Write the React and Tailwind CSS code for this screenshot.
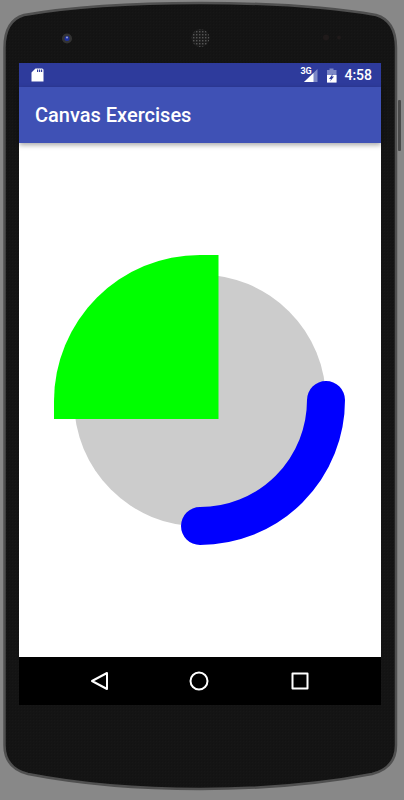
function PhoneBody() {
  return (
    <svg className="absolute inset-0" width="404" height="800" viewBox="0 0 404 800">
      <defs>
        <pattern id="grain" width="3" height="3" patternUnits="userSpaceOnUse">
          <rect width="3" height="3" fill="#141414" />
          <rect width="1" height="1" fill="#171717" />
          <rect x="2" y="2" width="1" height="1" fill="#121212" />
        </pattern>
        <pattern id="mesh" width="3" height="3" patternUnits="userSpaceOnUse">
          <rect width="3" height="3" fill="#1c1c1c" />
          <rect x="1" y="1" width="1.4" height="1.4" fill="#555" />
        </pattern>
      </defs>
      <rect x="398" y="100" width="3" height="51" rx="1" fill="#4a4a4a" />
      <path
        d="M4.5 120 L4.5 48 C4.5 30 10 19 24 15 C70 7 130 3 200 3 C270 3 330 7 376 15 C390 19 396 30 396 48 L396 745 C396 760 388 770 372 774 C320 784 260 789 200 789 C140 789 80 784 28 774 C12 770 4.5 760 4.5 745 Z"
        fill="url(#grain)"
        stroke="#505050"
        strokeWidth="2.5"
      />
      <circle cx="67" cy="38.5" r="5" fill="#333" />
      <circle cx="67" cy="38.5" r="2.5" fill="#1d2f9a" />
      <circle cx="67" cy="37.5" r="1" fill="#9aa4d8" />
      <circle cx="200.5" cy="38" r="9" fill="url(#mesh)" />
      <circle cx="326" cy="37.5" r="3" fill="#1f1a1a" />
      <circle cx="339" cy="37.5" r="2" fill="#1f1a1a" />
    </svg>
  );
}

function StatusBar() {
  return (
    <div className="flex h-[24px] items-center justify-between bg-[#2e3b9c] pl-[12px] pr-[9px]">
      <svg width="13" height="14" viewBox="0 0 13 14">
        <path d="M4.5 0.5 H11 A1.5 1.5 0 0 1 12.5 2 V13.5 H0.5 V4.5 Z" fill="#fff" />
        <rect x="6" y="1.5" width="1.2" height="2.5" fill="#2e3b9c" />
        <rect x="8" y="1.5" width="1.2" height="2.5" fill="#2e3b9c" />
        <rect x="10" y="1.5" width="1.2" height="2.5" fill="#2e3b9c" />
      </svg>
      <div className="flex items-center">
        <div className="relative h-[16px] w-[18px]">
          <span className="absolute left-0 top-[-1px] font-['Roboto',sans-serif] text-[9px] font-bold leading-[10px] text-white">3G</span>
          <svg className="absolute left-0 top-0" width="18" height="16" viewBox="0 0 18 16">
            <path d="M17.5 2 V15 H4 Z" fill="#7d88c6" />
            <path d="M13.5 6 V15 H4 Z" fill="#fff" />
          </svg>
        </div>
        <svg className="ml-[8px]" width="11" height="15" viewBox="0 0 11 15">
          <path d="M3.5 0.5 H7.5 V2 H10.5 V14.5 H1 V2 H3.5 Z" fill="#7d88c6" />
          <path d="M1 7 H10.5 V14.5 H1 Z" fill="#fff" />
          <path d="M7 5.5 L3 11 H5 L4 13.5 L8 8.5 H6 Z" fill="#2e3b9c" />
        </svg>
        <span className="ml-[7px] font-['Roboto',sans-serif] text-[14px] font-medium leading-[24px] text-white">4:58</span>
      </div>
    </div>
  );
}

function Exercises() {
  // same coordinates as the page, so the numbers read straight off the screenshot
  return (
    <svg className="block" width="362" height="514" viewBox="19 143 362 514">
      <circle cx="200" cy="400.5" r="126" fill="#cccccc" />
      <path d="M218.5 255 H200 A146 146 0 0 0 54 401 V419 H218.5 Z" fill="#00ff00" />
      <path d="M326 400 A126 126 0 0 1 200 526" fill="none" stroke="#0000ff" strokeWidth="38" strokeLinecap="round" />
    </svg>
  );
}

function NavBar() {
  return (
    <div className="flex h-[48px] items-center bg-black pl-[71px]">
      <svg width="19" height="20" viewBox="0 0 19 20" fill="none" stroke="#fff" strokeWidth="2" strokeLinejoin="round">
        <path d="M17 2 V18 L2 10 Z" />
      </svg>
      <svg className="ml-[80px]" width="20" height="20" viewBox="0 0 20 20" fill="none" stroke="#fff" strokeWidth="2">
        <circle cx="10" cy="10" r="8.5" />
      </svg>
      <svg className="ml-[82px]" width="18" height="18" viewBox="0 0 18 18" fill="none" stroke="#fff" strokeWidth="2" strokeLinejoin="round">
        <rect x="1.5" y="1.5" width="15" height="15" />
      </svg>
    </div>
  );
}

export default function App() {
  return (
    <div className="relative h-[800px] w-[404px] overflow-hidden bg-[#888888]">
      <PhoneBody />
      <div className="relative flex w-full flex-col px-[19px] pt-[63px]">
        <div className="flex w-[362px] flex-col">
          <StatusBar />
          <div className="relative z-10 flex h-[56px] items-center bg-[#3f51b5] pl-[16px] shadow-[0_2px_5px_rgba(0,0,0,0.35)]">
            <h1 className="font-['Roboto',sans-serif] text-[20px] font-medium text-white">Canvas Exercises</h1>
          </div>
          <div className="h-[514px] bg-white">
            <Exercises />
          </div>
          <NavBar />
        </div>
      </div>
    </div>
  );
}
